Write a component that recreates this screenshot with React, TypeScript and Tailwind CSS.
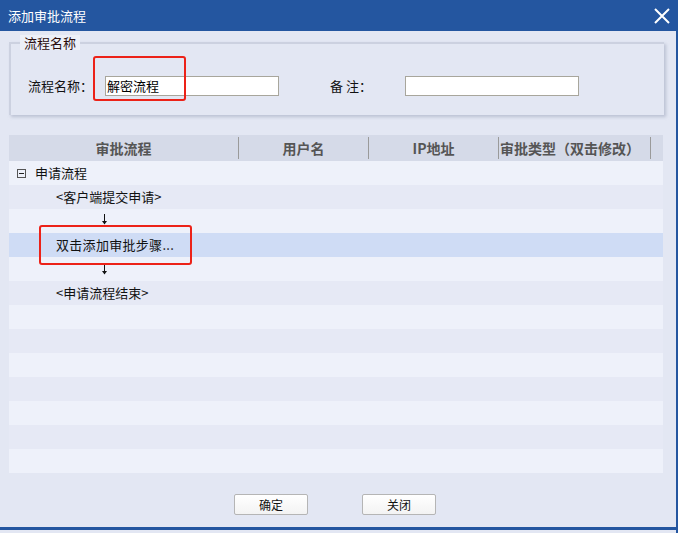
import React from "react";

const font = { fontFamily: '"Noto Sans CJK SC", "Noto Sans", sans-serif' };

const ArrowDown: React.FC = () => (
  <svg width="7" height="11" viewBox="0 0 7 11" className="ml-[92px]">
    <line x1="3.5" y1="0" x2="3.5" y2="10" stroke="#111" strokeWidth="1" />
    <path d="M1 7 L3.5 10.5 L6 7 Z" fill="#111" />
  </svg>
);

const App: React.FC = () => {
  // 13 rows in the grid, first 6 hold the flow
  const rows: React.ReactNode[] = [
    <div className="flex items-center pl-2 gap-[9px]">
      <span className="w-[9px] h-[9px] border border-[#555] flex items-center justify-center">
        <span className="w-[5px] h-px bg-[#222]" />
      </span>
      <span className="text-[13px] text-[#111]">申请流程</span>
    </div>,
    <span className="pl-[47px] text-[13px] text-[#111]">&lt;客户端提交申请&gt;</span>,
    <div className="flex items-end h-full pb-[8px]"><ArrowDown /></div>,
    <span className="pl-[47px] text-[13px] text-[#111] tracking-[0.3px]">双击添加审批步骤...</span>,
    <div className="flex items-start h-full pt-[7px]"><ArrowDown /></div>,
    <span className="pl-[47px] text-[13px] text-[#111]">&lt;申请流程结束&gt;</span>,
  ];
  while (rows.length < 13) rows.push(null);

  return (
    <div className="relative w-[678px] h-[533px] bg-[#e3e7f3] flex flex-col border-r-2 border-[#2456a0]" style={font}>
      {/* Title bar */}
      <div className="h-[31px] bg-[#2456a0] flex items-center justify-between pl-2 pr-[6px] shrink-0">
        <span className="text-white text-[13px]">添加审批流程</span>
        <svg width="16" height="16" viewBox="0 0 16 16">
          <path d="M1 1 L15 15 M15 1 L1 15" stroke="#fff" strokeWidth="2" />
        </svg>
      </div>

      {/* Group box */}
      <div className="relative mt-[11px] ml-[9px] w-[655px] h-[73px] bg-[#e3e7f3] border-t-2 border-l-2 border-[#ccd1e0] shadow-[2px_2px_3px_rgba(160,168,190,0.6)] shrink-0">
        <span className="absolute -top-[9px] left-[9px] px-[4px] bg-[#edf0f8] text-[13px] leading-[15px] text-[#2a0c0c]">流程名称</span>
        <div className="flex items-center pt-[32px] pl-[17px]">
          <span className="text-[13px] text-[#111] w-[77px]">流程名称：</span>
          <div className="w-[174px] h-[20px] bg-white border border-[#a8a69c] flex items-center pl-px text-[13px] text-black">解密流程</div>
          <span className="text-[13px] text-[#111] ml-[51px] w-[75px]">备 注：</span>
          <div className="w-[174px] h-[20px] bg-white border border-[#a8a69c]" />
        </div>
      </div>

      {/* Grid */}
      <div className="mt-[20px] ml-[9px] w-[654px] shrink-0">
        <div className="h-[26px] bg-[#d5dae8] flex items-center text-[14px] font-bold text-[#555]">
          <div className="w-[229px] text-center">审批流程</div>
          <div className="w-px h-[22px] bg-[#9a9a9a]" />
          <div className="w-[129px] text-center">用户名</div>
          <div className="w-px h-[22px] bg-[#9a9a9a]" />
          <div className="w-[129px] text-center">IP地址</div>
          <div className="w-px h-[22px] bg-[#9a9a9a]" />
          <div className="w-[151px] pl-[1px] whitespace-nowrap overflow-hidden">审批类型（双击修改）</div>
          <div className="w-px h-[22px] bg-[#9a9a9a]" />
        </div>
        {rows.map((content, i) => (
          <div
            key={i}
            className={`h-[24px] flex items-center ${
              i === 3 ? "bg-[#cfdcf5]" : i % 2 === 0 ? "bg-[#eef1fa]" : "bg-[#e6e9f5]"
            }`}
          >
            {content}
          </div>
        ))}
      </div>

      {/* Buttons */}
      <div className="mt-[21px] flex pl-[234px] gap-[54px] shrink-0">
        <button className="w-[74px] h-[21px] bg-gradient-to-b from-white to-[#f3f3f3] border border-[#b5b5b5] rounded-[2px] text-[12px] text-[#111]">确定</button>
        <button className="w-[74px] h-[21px] bg-gradient-to-b from-white to-[#f3f3f3] border border-[#b5b5b5] rounded-[2px] text-[12px] text-[#111]">关闭</button>
      </div>

      <div className="mt-auto h-[3px] bg-[#2456a0] shrink-0" />
      <div className="h-[3px] shrink-0" />

      {/* Annotation boxes */}
      <div className="absolute left-[93px] top-[56px] w-[93px] h-[45px] border-2 border-[#ec2218] rounded-[3px]" />
      <div className="absolute left-[39px] top-[225px] w-[153px] h-[40px] border-2 border-[#ec2218] rounded-[3px]" />
    </div>
  );
};

export default App;
